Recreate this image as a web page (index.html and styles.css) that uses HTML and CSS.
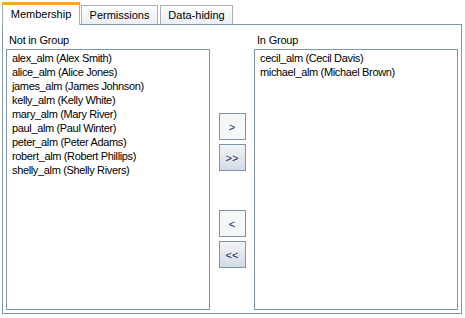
FILE: index.html
```html
<!DOCTYPE html>
<html lang="en">
<head>
    <meta charset="UTF-8">
    <title>Group Membership</title>
    <link rel="stylesheet" href="styles.css">
</head>
<body>

<div class="tab-bar">
    <div class="tab active">Membership</div>
    <div class="tab tab-permissions">Permissions</div>
    <div class="tab tab-hiding">Data-hiding</div>
</div>

<div class="panel">
    <div class="column">
        <div class="list-label">Not in Group</div>
        <ul class="listbox">
            <li>alex_alm (Alex Smith)</li>
            <li>alice_alm (Alice Jones)</li>
            <li>james_alm (James Johnson)</li>
            <li>kelly_alm (Kelly White)</li>
            <li>mary_alm (Mary River)</li>
            <li>paul_alm (Paul Winter)</li>
            <li>peter_alm (Peter Adams)</li>
            <li>robert_alm (Robert Phillips)</li>
            <li>shelly_alm (Shelly Rivers)</li>
        </ul>
    </div>

    <div class="move-buttons">
        <button class="move-btn">&gt;</button>
        <button class="move-btn shaded">&gt;&gt;</button>
        <button class="move-btn back">&lt;</button>
        <button class="move-btn shaded">&lt;&lt;</button>
    </div>

    <div class="column">
        <div class="list-label">In Group</div>
        <ul class="listbox">
            <li>cecil_alm (Cecil Davis)</li>
            <li>michael_alm (Michael Brown)</li>
        </ul>
    </div>
</div>

</body>
</html>
```

FILE: styles.css
```css
body {
    margin: 0;
    padding: 2px 0 0 2px;
    background-color: #fff;
    font-family: "Liberation Sans", Arial, sans-serif;
    font-size: 11px;
    color: #000;
}

/* Tabs */
.tab-bar {
    display: flex;
    align-items: flex-end;
    gap: 1px;
    height: 22px;
}

.tab {
    box-sizing: border-box;
    height: 19px;
    border: 1px solid #a7b1b9;
    border-bottom: none;
    background: linear-gradient(#fdfdfd, #eceef0);
    text-align: center;
    line-height: 18px;
}

.tab-permissions {
    width: 77px;
}

.tab-hiding {
    width: 73px;
    margin-left: 1px;
}

.tab.active {
    position: relative;
    z-index: 1;
    width: 78px;
    height: 23px;
    margin-bottom: -1px;
    border-top: 3px solid #f6a434;
    background: #fff;
    line-height: 19px;
}

/* Panel */
.panel {
    box-sizing: border-box;
    display: flex;
    width: 460px;
    height: 290px;
    padding: 8px 3px 3px 3px;
    border: 1px solid #7f96ad;
}

.column {
    display: flex;
    flex-direction: column;
    width: 204px;
}

.list-label {
    line-height: 14px;
    margin-bottom: 2px;
    padding-left: 3px;
    letter-spacing: -0.2px;
}

.listbox {
    flex: 1;
    margin: 0;
    padding: 1px 0 0 5px;
    list-style: none;
    border: 1px solid #7f96ad;
}

.listbox li {
    line-height: 14px;
    white-space: nowrap;
    letter-spacing: -0.35px;
}

/* Move buttons */
.move-buttons {
    width: 44px;
    display: flex;
    flex-direction: column;
    align-items: center;
    gap: 4px;
    padding-top: 80px;
}

.move-btn {
    box-sizing: border-box;
    width: 27px;
    height: 27px;
    padding: 0;
    border: 1px solid #7a95b0;
    background-color: #f6f7f7;
    color: #1b2a6a;
    font-family: "Liberation Sans", Arial, sans-serif;
    font-size: 11px;
    cursor: pointer;
}

.move-btn.shaded {
    background: linear-gradient(#f2f4f6, #d2dbe4);
}

.move-btn.back {
    margin-top: 35px;
}
```
